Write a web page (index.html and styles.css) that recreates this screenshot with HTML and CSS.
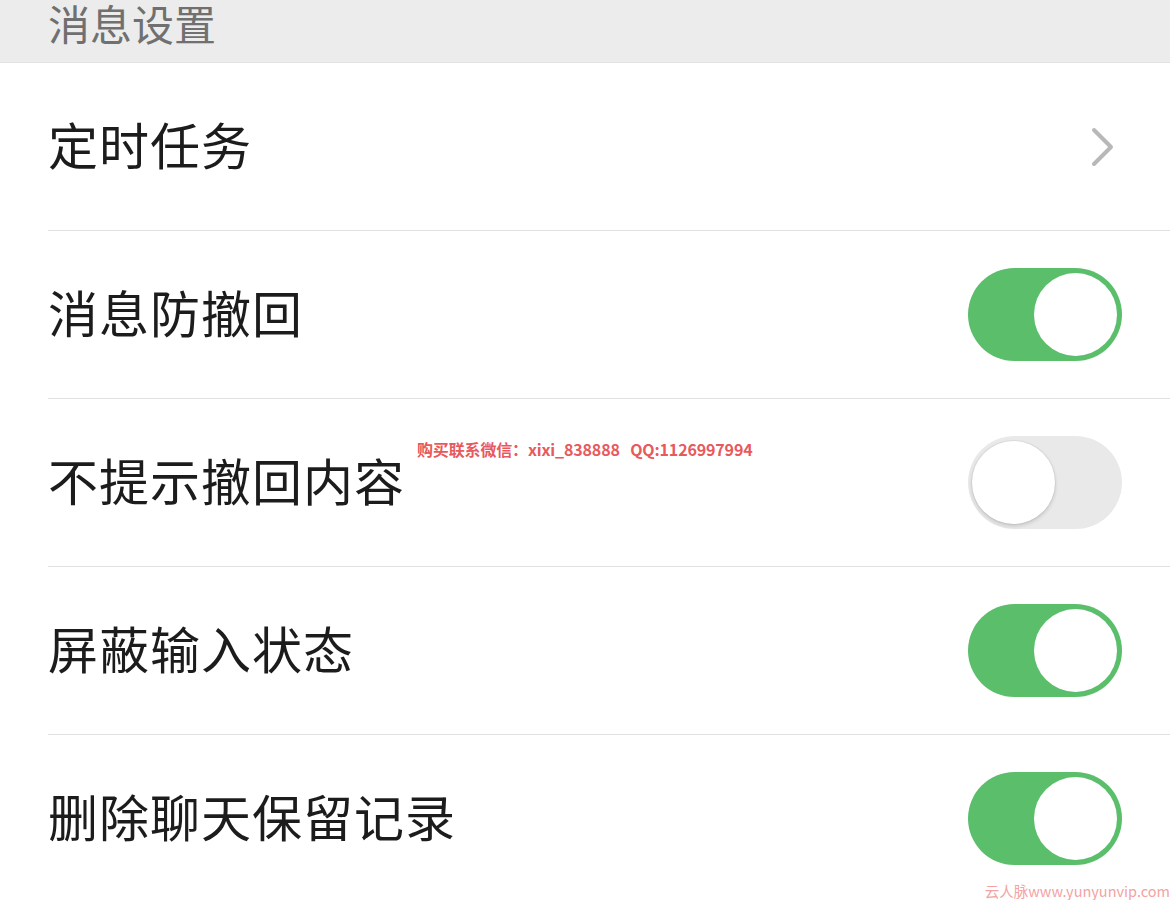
FILE: index.html
```html
<!DOCTYPE html>
<html lang="zh-CN">
<head>
    <meta charset="UTF-8">
    <meta name="viewport" content="width=device-width, initial-scale=1.0">
    <title>消息设置</title>
    <link rel="stylesheet" href="styles.css">
</head>
<body>

<div class="page">
    <!-- En-tête de section -->
    <div class="section-header">消息设置</div>

    <div class="list">
        <div class="row">
            <span class="label">定时任务</span>
            <svg class="chevron" width="26" height="42" viewBox="0 0 26 42">
                <polyline points="4,4 21,21 4,38" fill="none" stroke="#b8b8b8" stroke-width="4" stroke-linecap="round" stroke-linejoin="round"/>
            </svg>
        </div>
        <div class="row">
            <span class="label">消息防撤回</span>
            <div class="switch on"><div class="knob"></div></div>
        </div>
        <div class="row">
            <span class="label">不提示撤回内容</span>
            <div class="switch off"><div class="knob"></div></div>
        </div>
        <div class="row">
            <span class="label">屏蔽输入状态</span>
            <div class="switch on"><div class="knob"></div></div>
        </div>
        <div class="row last">
            <span class="label">删除聊天保留记录</span>
            <div class="switch on"><div class="knob"></div></div>
        </div>
    </div>

    <!-- Filigranes -->
    <div class="mark-center">购买联系微信：xixi_838888&nbsp;&nbsp;&nbsp;QQ:1126997994</div>
    <div class="mark-corner">云人脉www.yunyunvip.com</div>
</div>

</body>
</html>
```

FILE: styles.css
```css
html, body {
    margin: 0;
    padding: 0;
    background-color: #fff;
}
body {
    font-family: "Noto Sans CJK SC", "Noto Sans", sans-serif;
    width: 1170px;
    height: 900px;
    overflow: hidden;
}
.page {
    position: relative;
    width: 1170px;
    height: 900px;
}
.section-header {
    height: 63px;
    background-color: #ececec;
    border-bottom: 1px solid #e2e2e2;
    box-sizing: border-box;
    padding-left: 48px;
    padding-top: 2px;
    font-size: 42px;
    line-height: 42px;
    color: #707070;
}
.list {
    display: flex;
    flex-direction: column;
}
.row {
    display: flex;
    align-items: center;
    justify-content: space-between;
    height: 167px;
    margin-left: 48px;
    padding-right: 48px;
    border-bottom: 1px solid #e1e1e1;
}
.row.last {
    border-bottom: none;
}
.label {
    font-size: 50px;
    color: #1c1c1c;
    letter-spacing: 1px;
    margin-bottom: 8px;
}
.chevron {
    margin-right: 6px;
}
/* Interrupteur */
.switch {
    position: relative;
    width: 154px;
    height: 93px;
    border-radius: 47px;
    box-sizing: border-box;
}
.switch.on {
    background-color: #5bbe6b;
}
.switch.off {
    background-color: #e9e9e9;
}
.knob {
    position: absolute;
    top: 5px;
    width: 83px;
    height: 83px;
    border-radius: 50%;
    background-color: #fff;
}
.switch.on .knob {
    right: 5px;
}
.switch.off .knob {
    left: 4px;
    box-shadow: 0 2px 4px rgba(0, 0, 0, 0.16), 0 0 0 1px rgba(0, 0, 0, 0.04);
}
.mark-center {
    position: absolute;
    left: 417px;
    top: 437px;
    font-family: "Noto Sans CJK SC", sans-serif;
    font-size: 16px;
    font-weight: bold;
    color: #e8595c;
    white-space: nowrap;
    letter-spacing: -0.15px;
}
.mark-corner {
    position: absolute;
    right: 0;
    bottom: 0;
    font-family: "Noto Sans CJK SC", sans-serif;
    font-size: 14.5px;
    line-height: 18px;
    color: #f3a3a3;
    white-space: nowrap;
}
```
